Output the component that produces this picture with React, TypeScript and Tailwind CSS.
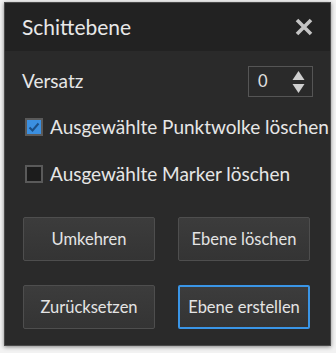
import React from 'react';

const font = { fontFamily: 'Lato, "Noto Sans", sans-serif' };

const Button = ({ label, active }: { label: string; active?: boolean }) => (
  <button
    className={
      'h-[44px] w-[132px] rounded-[2px] bg-gradient-to-b from-[#3c3c3c] to-[#343434] text-[16.5px] text-[#e4e4e4] ' +
      (active ? 'border-2 border-[#3a95e6]' : 'border border-[#4e4e4e]')
    }
  >
    {label}
  </button>
);

const Checkbox = ({ checked, label }: { checked?: boolean; label: string }) => (
  <div className="flex h-[30px] items-center">
    <div
      className={
        'ml-[3px] flex h-[18px] w-[18px] shrink-0 items-center justify-center border-2 border-[#5a5a5a] ' +
        (checked ? 'bg-[#3b8fe0]' : 'bg-[#1c1c1c]')
      }
    >
      {checked && (
        <svg width="12" height="10" viewBox="0 0 12 10">
          <path d="M1.5 5.5 L4.5 8.5 L10.5 1.5" fill="none" stroke="#1c4f86" strokeWidth="2" />
        </svg>
      )}
    </div>
    <span className="ml-[7px] whitespace-nowrap text-[19px] text-[#e6e6e6]">{label}</span>
  </div>
);

export default function App() {
  return (
    <div className="h-[353px] w-[336px] bg-[#f2f2f2] pt-[2px]" style={font}>
      <div className="ml-[4px] h-[344px] w-[327px] overflow-hidden border border-[#4a4a4a] bg-[#2a2a2a] shadow-[0_1px_4px_rgba(0,0,0,0.45)]">
        <div className="flex h-[48px] items-center justify-between bg-[#222222] pl-[17px] pr-[17px]">
          <span className="text-[21px] text-[#e8e8e8]">Schittebene</span>
          <svg width="18" height="18" viewBox="0 0 18 18">
            <path d="M2 2 L16 16 M16 2 L2 16" stroke="#c4c4c4" strokeWidth="3.6" />
          </svg>
        </div>
        <div className="pl-[17px] pr-[17px] pt-[15px]">
          <div className="flex h-[31px] items-center justify-between">
            <span className="text-[19px] text-[#e6e6e6]">Versatz</span>
            <div className="flex h-[31px] w-[65px] items-center justify-between border border-[#555555] pl-[9px] pr-[7px]">
              <span className="text-[16.5px] text-[#e0e0e0]">0</span>
              <svg width="13" height="24" viewBox="0 0 13 24">
                <path d="M6.5 1 L12.5 10 L0.5 10 Z" fill="#cfcfcf" />
                <path d="M0.5 14 L12.5 14 L6.5 23 Z" fill="#cfcfcf" />
              </svg>
            </div>
          </div>
          <div className="mt-[15px]">
            <Checkbox checked label="Ausgewählte Punktwolke löschen" />
          </div>
          <div className="mt-[17px]">
            <Checkbox label="Ausgewählte Marker löschen" />
          </div>
          <div className="mt-[28px] grid w-[288px] grid-cols-[132px_132px] justify-between gap-y-[24px] pl-[1px]">
            <Button label="Umkehren" />
            <Button label="Ebene löschen" />
            <Button label="Zurücksetzen" />
            <Button label="Ebene erstellen" active />
          </div>
        </div>
      </div>
    </div>
  );
}
